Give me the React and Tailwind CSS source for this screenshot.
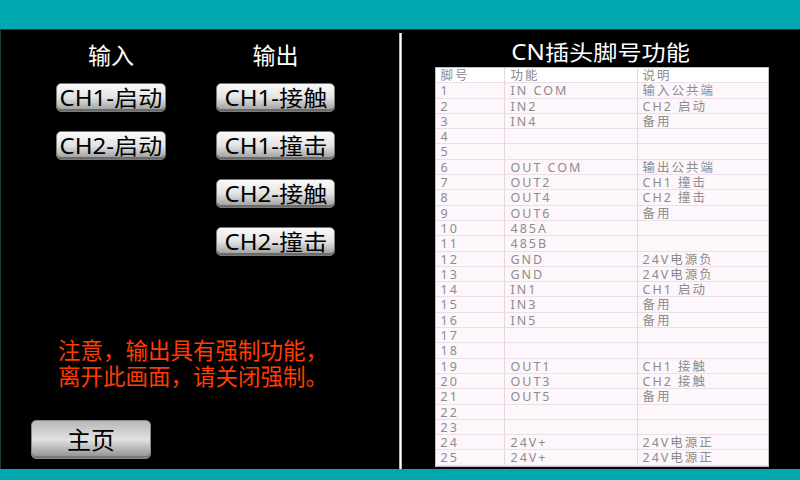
import React from 'react';

const PINS = [
  ['1', 'IN COM', '输入公共端'],
  ['2', 'IN2', 'CH2 启动'],
  ['3', 'IN4', '备用'],
  ['4', '', ''],
  ['5', '', ''],
  ['6', 'OUT COM', '输出公共端'],
  ['7', 'OUT2', 'CH1 撞击'],
  ['8', 'OUT4', 'CH2 撞击'],
  ['9', 'OUT6', '备用'],
  ['10', '485A', ''],
  ['11', '485B', ''],
  ['12', 'GND', '24V电源负'],
  ['13', 'GND', '24V电源负'],
  ['14', 'IN1', 'CH1 启动'],
  ['15', 'IN3', '备用'],
  ['16', 'IN5', '备用'],
  ['17', '', ''],
  ['18', '', ''],
  ['19', 'OUT1', 'CH1 接触'],
  ['20', 'OUT3', 'CH2 接触'],
  ['21', 'OUT5', '备用'],
  ['22', '', ''],
  ['23', '', ''],
  ['24', '24V+', '24V电源正'],
  ['25', '24V+', '24V电源正'],
];

const font = { fontFamily: '"Noto Sans", "Noto Sans CJK SC", sans-serif' };

// glossy grey HMI button
const HmiButton = ({ label, wide }) => (
  <button
    className={`h-[29px] ${wide ? 'w-[119px]' : 'w-[110px]'} rounded-[5px] border border-[#7a7a7a] bg-gradient-to-b from-[#fafafa] via-[#e4e4e4] to-[#9a9a9a] text-black text-[21.5px] leading-none flex items-center justify-center shadow-[inset_0_-2px_0_#6c6c6c]`}
  >
    <span className="inline-block scale-x-[1.12]">{label}</span>
  </button>
);

const Row = ({ cells, header }) => (
  <div className={`grid grid-cols-[69px_133px_1fr] h-[15.3px] border-b border-[#eddfe9] ${header ? 'bg-white' : 'bg-[#fdf7fb]'}`}>
    <div className="pl-[5px] border-r border-[#e3d6df] leading-[15px]">{cells[0]}</div>
    <div className="pl-[6px] border-r border-[#e3d6df] leading-[15px]">{cells[1]}</div>
    <div className="pl-[5px] leading-[15px]">{cells[2]}</div>
  </div>
);

export default function App() {
  return (
    <div className="w-[800px] h-[480px] bg-black flex flex-col overflow-hidden" style={font}>
      {/* top bar */}
      <div className="h-[30px] bg-[#00a8b0] border-b border-[#0f3535] shrink-0" />

      <div className="h-[439px] flex border-l border-[#163b3b]">
        {/* left: manual outputs */}
        <div className="w-[398px] flex flex-col">
          <div className="pl-[55px] pt-[12px] grid grid-cols-[110px_119px] gap-x-[50px]">
            <div className="h-[26px] text-white text-[23px] leading-[26px] text-center">输入</div>
            <div className="h-[26px] text-white text-[23px] leading-[26px] text-center">输出</div>
            <div className="mt-[15px] flex flex-col gap-[19px]">
              <HmiButton label="CH1-启动" />
              <HmiButton label="CH2-启动" />
            </div>
            <div className="mt-[15px] flex flex-col gap-[19px]">
              <HmiButton label="CH1-接触" wide />
              <HmiButton label="CH1-撞击" wide />
              <HmiButton label="CH2-接触" wide />
              <HmiButton label="CH2-撞击" wide />
            </div>
          </div>

          <div className="mt-[82px] pl-[57px] text-[#ff3c00] text-[22.5px] leading-[26px]">
            <div>注意，输出具有强制功能，</div>
            <div>离开此画面，请关闭强制。</div>
          </div>

          <button className="mt-[30px] ml-[30px] w-[120px] h-[39px] rounded-[5px] border border-[#8a8a8a] bg-gradient-to-b from-[#b8b8b8] via-[#e2e2e2] to-[#8e8e8e] text-black text-[24px] leading-none flex items-center justify-center shadow-[inset_0_-2px_0_#777]">
            主页
          </button>
        </div>

        {/* divider */}
        <div className="mt-[3px] w-[3px] bg-white border-x border-[#d9a3d6]" />

        {/* right: pin table */}
        <div className="flex-1 flex flex-col items-center">
          <div className="h-[37px] text-white text-[21px] leading-[44px] text-center">
            <span className="inline-block scale-x-[1.15]">CN插头脚号功能</span>
          </div>
          <div className="w-[334px] ml-[1px] border border-[#c4bcc2] text-[#8c8c8c] text-[12.5px] tracking-[2px] bg-white">
            <Row cells={['脚号', '功能', '说明']} header />
            {PINS.map((p) => (
              <Row key={p[0]} cells={p} />
            ))}
          </div>
        </div>
      </div>

      {/* bottom bar */}
      <div className="flex-1 bg-[#00a8b0]" />
    </div>
  );
}
